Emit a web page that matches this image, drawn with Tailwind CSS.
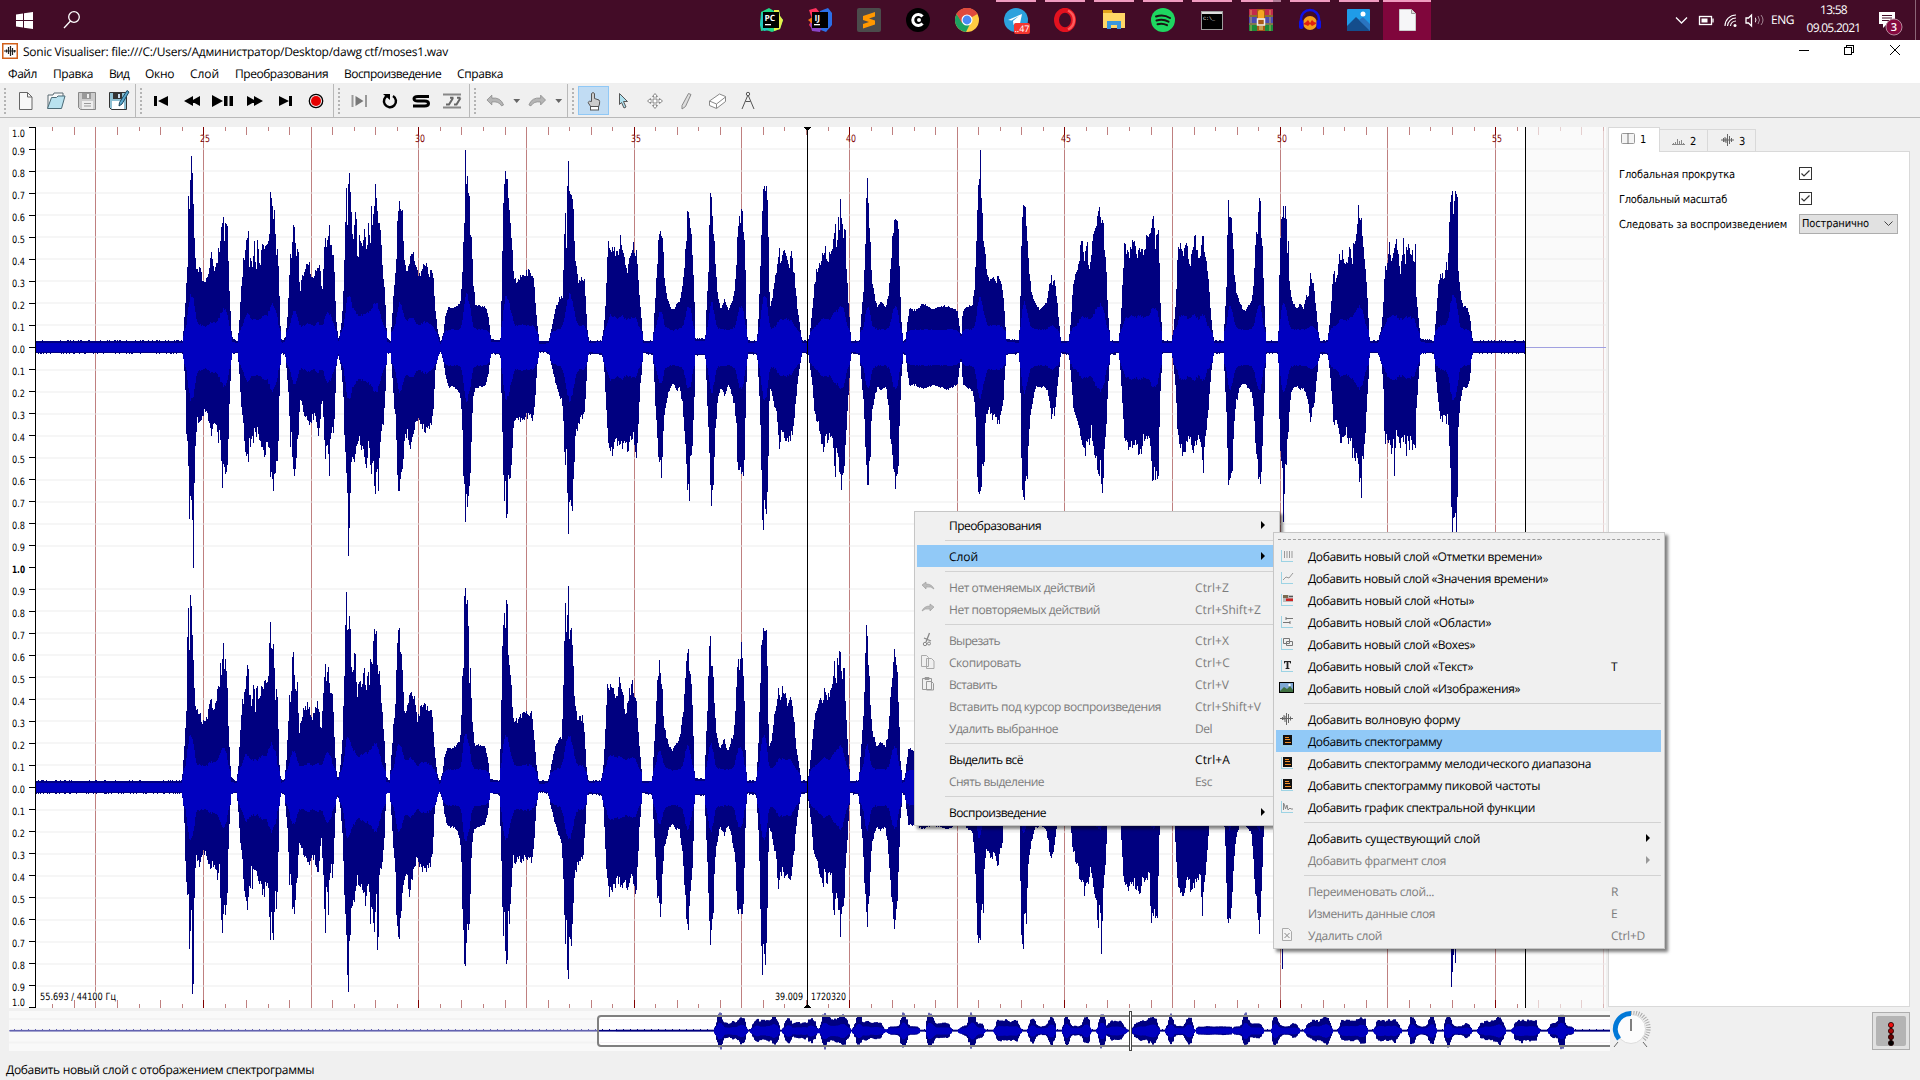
<!DOCTYPE html>
<html lang="ru">
<head>
<meta charset="utf-8">
<title>Sonic Visualiser</title>
<script src="https://cdn.jsdelivr.net/npm/@tailwindcss/browser@4"></script>
</head>
<body class="w-[1920px] h-[1080px] overflow-hidden bg-[#f0f0f0] text-black text-[12px] leading-[16px] font-['Open_Sans','Noto_Sans',sans-serif] [text-rendering:geometricPrecision] relative flex flex-col whitespace-nowrap">

<!-- Taskbar -->
<header class="h-[40px] w-full bg-[#430c27] flex shrink-0 text-white">
  <div class="w-[746px] flex">
    <div class="w-[48px] grid place-items-center"><svg width="17" height="17" viewBox="0 0 17 17" fill="#fff"><path d="M0 2.5l7-1v6.6H0zM8 1.3L17 0v8.1H8zM0 9h7v6.600l-7-1zM8 9h9v8l-9-1.300z"/></svg></div>
    <div class="w-[48px] grid place-items-center"><svg width="18" height="18" viewBox="0 0 18 18" fill="none" stroke="#fff" stroke-width="1.300"><circle cx="11" cy="6" r="5.300"/><path d="M7.500 10L1 17"/></svg></div>
  </div>
  <nav class="flex w-[690px]">
    <div class="w-[49px] grid place-items-center"><svg width="26" height="26" viewBox="0 0 26 26"><path d="M3 5l8-4 5 3 5-1 1 6 3 4-3 9-8 3-6-2-5 1-1-6z" fill="#21d789"/><path d="M16 3l5 0 1 6 3 4-3 9-6 2z" fill="#e8ee49"/><path d="M4 5l-2 13 4 6 5-1z" fill="#20c8c0"/><rect x="5" y="5" width="16" height="16" fill="#000"/><text x="6.500" y="13.500" font-size="8.500" font-weight="700" fill="#fff" font-family="Open Sans">PC</text><rect x="7" y="17" width="6" height="1.300" fill="#fff"/></svg></div>
    <div class="w-[49px] grid place-items-center"><svg width="26" height="26" viewBox="0 0 26 26"><path d="M2 3l7-2 5 6-8 16-4-5 3-6z" fill="#fe315d"/><path d="M13 4l8-3 4 5v12l-6 7-8-3z" fill="#2b6fe8"/><path d="M3 16l2 8 8 1 2-6z" fill="#8a45c8"/><path d="M1 13l6-4v9z" fill="#f97a12"/><rect x="5" y="5" width="16" height="16" fill="#000"/><text x="7.500" y="13.500" font-size="8.500" font-weight="700" fill="#fff" font-family="Open Sans">IJ</text><rect x="7" y="17" width="6" height="1.300" fill="#fff"/></svg></div>
    <div class="w-[49px] grid place-items-center"><svg width="24" height="24" viewBox="0 0 24 24"><rect width="24" height="24" rx="2" fill="#4b4b4b"/><path d="M6 8l12-4v4.500l-6 2 6 2v4L6 20.500V16l6-2-6-2z" fill="#ff9800"/></svg></div>
    <div class="w-[49px] grid place-items-center"><svg width="24" height="24" viewBox="0 0 24 24"><circle cx="12" cy="12" r="12" fill="#000"/><path d="M16.500 8.500A5.500 5.500 0 1 0 16.500 15.500" fill="none" stroke="#fff" stroke-width="3"/><circle cx="13" cy="12" r="2" fill="#fff"/></svg></div>
    <div class="w-[49px] grid place-items-center"><svg width="24" height="24" viewBox="0 0 24 24"><circle cx="12" cy="12" r="12" fill="#ffcd42"/><path d="M12 12L1.600 6A12 12 0 0 1 22.400 6z" fill="#df4a3e"/><path d="M12 12h-6L1.600 6A12 12 0 0 0 11 24l4-8z" fill="#1da261"/><path d="M1.600 6L7 15l5-9h10.400A12 12 0 0 0 1.600 6z" fill="#df4a3e"/><circle cx="12" cy="12" r="5.500" fill="#fff"/><circle cx="12" cy="12" r="4.400" fill="#4a8af4"/></svg></div>
    <div class="w-[49px] grid place-items-center relative"><i class="absolute top-0 left-[5px] w-[40px] h-[2px] bg-[#f09cc0]"></i><svg width="24" height="24" viewBox="0 0 24 24"><circle cx="12" cy="12" r="12" fill="#2ca1dd"/><path d="M4 12l14-6-2.500 12-4-3-2 2-.500-4 6-5-7.500 4.500z" fill="#fff"/></svg><span class="absolute left-[23px] top-[23px] w-[16px] h-[11px] rounded-[2px] bg-[#f5372f] text-[9px] leading-[11px] text-center">..47</span></div>
    <div class="w-[49px] grid place-items-center relative"><i class="absolute top-0 left-[5px] w-[40px] h-[2px] bg-[#f09cc0]"></i><svg width="24" height="24" viewBox="0 0 24 24"><ellipse cx="12" cy="12" rx="8.500" ry="9.700" fill="none" stroke="#e3121f" stroke-width="5"/><path d="M15 2.500q6 3 6 9.500t-6 9.500" fill="none" stroke="#ff5a5a" stroke-width="2.500"/></svg></div>
    <div class="w-[49px] grid place-items-center relative"><i class="absolute top-0 left-[5px] w-[40px] h-[2px] bg-[#f09cc0]"></i><svg width="22" height="20" viewBox="0 0 22 20"><path d="M0 1h8l2 2h12v15H0z" fill="#ffd766"/><rect width="9" height="3" fill="#e2a21c"/><path d="M4 19v-8h14v8h-4v-4H8v4z" fill="#3a96dd"/></svg></div>
    <div class="w-[49px] grid place-items-center relative"><i class="absolute top-0 left-[5px] w-[40px] h-[2px] bg-[#f09cc0]"></i><svg width="24" height="24" viewBox="0 0 24 24"><circle cx="12" cy="12" r="12" fill="#1ed760"/><path d="M5 8.500q7.500-2.500 14 1.500M5.500 12.500q6.500-2 12 1.200M6.500 16.200q5-1.500 9.500 1" fill="none" stroke="#191414" stroke-width="2" stroke-linecap="round"/></svg></div>
    <div class="w-[49px] grid place-items-center relative"><i class="absolute top-0 left-[5px] w-[40px] h-[2px] bg-[#f09cc0]"></i><svg width="22" height="19" viewBox="0 0 22 19"><rect x=".5" y=".5" width="21" height="18" fill="#000" stroke="#9c9c9c"/><rect x="1" y="1" width="20" height="2" fill="#ddd"/><text x="2" y="9" font-size="5" fill="#fff" font-family="Liberation Mono">C:\_</text></svg></div>
    <div class="w-[49px] grid place-items-center relative"><i class="absolute top-0 left-[5px] w-[40px] h-[2px] bg-[#f09cc0]"></i><i class="absolute top-0 left-[37px] w-[8px] h-[2px] bg-[#b07a96]"></i><svg width="24" height="22" viewBox="0 0 24 22"><rect width="24" height="6" fill="#c22b4b"/><rect y="6" width="24" height="2" fill="#8a7030"/><rect y="8" width="24" height="6" fill="#4c4cb0"/><rect y="14" width="24" height="2" fill="#807850"/><rect y="16" width="24" height="6" fill="#1d8a3c"/><path d="M2 1v5M21 1v5M2 8v6M21 8v6M2 16v6M21 16v6" stroke="#e8d060" opacity=".7"/><rect x="8" width="8" height="22" fill="#a85a18"/><rect x="9" y="1" width="6" height="10" rx="2" fill="#f5a623"/><path d="M8.500 10h7v6h-7z" fill="none" stroke="#eee" stroke-width="1.500"/><rect x="10" y="17" width="4" height="4" fill="#c8a050"/></svg></div>
    <div class="w-[49px] grid place-items-center relative"><i class="absolute top-0 left-[5px] w-[40px] h-[2px] bg-[#f09cc0]"></i><svg width="24" height="24" viewBox="0 0 24 24"><circle cx="12" cy="15" r="7" fill="#f5a01d"/><path d="M5 16l3-2 2-2 2 3 2-3 2 2 3 1-3 2-2 1-2-2-2 2-2-1z" fill="#e02010"/><path d="M3 15V11a9 9 0 0 1 18 0v4" fill="none" stroke="#0f12e8" stroke-width="2.500"/><rect x="1" y="12" width="4.500" height="9" rx="2" fill="#0f12e8"/><rect x="18.500" y="12" width="4.500" height="9" rx="2" fill="#0f12e8"/></svg></div>
    <div class="w-[49px] grid place-items-center relative"><i class="absolute top-0 left-[5px] w-[40px] h-[2px] bg-[#f09cc0]"></i><svg width="23" height="22" viewBox="0 0 23 22"><rect width="23" height="22" rx="1" fill="#1f9ce8"/><path d="M0 17L9 8l14 13v1H0z" fill="#144d8c"/><path d="M12 11l4-3 7 7v7z" fill="#2a74c0"/><circle cx="16" cy="5" r="2.500" fill="#fff"/></svg></div>
    <div class="w-[48px] grid place-items-center relative bg-[#80063c]"><i class="absolute top-0 left-0 w-[48px] h-[2px] bg-[#f09cc0]"></i><svg width="17" height="22" viewBox="0 0 17 22"><path d="M.5.5h12l4 4v17H.5z" fill="#f6f6f8" stroke="#ccc"/><path d="M12.500.5v4h4" fill="#ddd" stroke="#999"/></svg></div>
  </nav>
  <div class="w-[241px] ml-auto h-full flex items-center relative mr-[4px]">
    <svg width="80" height="20" viewBox="0 0 80 20" class="shrink-0" fill="none" stroke="#fff" stroke-width="1.300"><path d="M1 7.500l5.500 5.500L12 7.500"/><rect x="24.500" y="6.500" width="12" height="8"/><path d="M38 8.500v4"/><rect x="26.500" y="8.500" width="6" height="4" fill="#fff" stroke="none"/><g stroke-width="1.100"><path d="M50 16a11 11 0 0 1 11-11M52.500 16a8.500 8.500 0 0 1 8.500-8M55.500 16a5.500 5.500 0 0 1 5.500-5"/></g><circle cx="60" cy="15.500" r="1.500" fill="#fff" stroke="none"/><path d="M71 8h2.500l3-3v11l-3-3H71z"/></svg>
    <svg width="12" height="20" viewBox="0 0 12 20" class="shrink-0" fill="none" stroke="#fff" stroke-width="1"><path d="M0 7.500q2 2.500 0 5"/><path d="M3 6q3 4 0 8M6 5q4 5 0 10" opacity=".5"/></svg>
    <span class="ml-[4px] w-[23px] shrink-0"><span data-w="23">ENG</span></span>
    <div class="ml-[11px] w-[57px] shrink-0 flex flex-col items-center leading-[18px] pb-[2px]"><span data-w="27">13:58</span><span data-w="54">09.05.2021</span></div>
    <svg width="28" height="28" viewBox="0 0 28 28" class="ml-[17px] mt-[6px] shrink-0"><path d="M0 3h16v12H8l-4 4v-4H0z" fill="#fff"/><path d="M3 6.500h10M3 9h10M3 11.500h10" stroke="#430c27"/><circle cx="15" cy="18" r="8" fill="#85093f" stroke="#b68a9c"/><text x="15" y="22" text-anchor="middle" font-size="11" font-weight="600" fill="#fff" font-family="Open Sans">3</text></svg>
    <i class="absolute right-0 top-0 w-px h-[40px] bg-[#8b6577]"></i>
  </div>
</header>

<!-- Title bar -->
<div class="h-[23px] bg-white flex items-center shrink-0">
  <svg width="16" height="16" viewBox="0 0 16 16" class="ml-[2px] mb-[1px]"><rect x=".75" y=".75" width="14.500" height="14.500" fill="#fff" stroke="#d2601a" stroke-width="1.500"/><path d="M2 8h12M4.500 6.500v3M6.500 4v7M8.500 3v10M10.500 5v7M12.500 7v2.500" fill="none" stroke="#222" stroke-width="1.200"/></svg>
  <span class="ml-[5px] pt-[1px]" data-w="425">Sonic Visualiser: file:///C:/Users/Администратор/Desktop/dawg ctf/moses1.wav</span>
  <svg width="102" height="12" viewBox="0 0 102 12" class="ml-auto mr-[19px] mb-[3px]" fill="none" stroke="#000" shape-rendering="crispEdges"><path d="M0 6.500h10M45.500 3.500h7v7h-7zM47.500 3.500v-2h7v7h-2"/><path d="M91 1l10 10M101 1L91 11" shape-rendering="auto"/></svg>
</div>
<!-- Menu bar -->
<div class="h-[21px] bg-white flex items-center gap-[16px] pl-[8px] pt-[2px] shrink-0 border-b border-[#efefef]">
  <span data-w="29">Файл</span><span data-w="40">Правка</span><span data-w="20">Вид</span><span data-w="29">Окно</span><span data-w="29">Слой</span><span data-w="93">Преобразования</span><span data-w="97">Воспроизведение</span><span data-w="46">Справка</span>
</div>
<!-- Tool bar -->
<div class="h-[34px] bg-[#f0f0f0] border-b border-[#b9b9b9] flex shrink-0">
  <div class="w-[136px] flex items-center border-r border-[#b9b9b9]">
    <i class="ml-[4px] w-[2px] h-[26px] border-l-2 border-dotted border-[#b4b4b4]"></i>
    <svg class="ml-[10px]" width="116" height="26" viewBox="16 0 116 26"><path d="M19.500 4.500h8l4.500 4.500v12.500H19.500z" fill="#f8f8f8" stroke="#666"/><path d="M27.500 4.500v4.500h4.500" fill="none" stroke="#666"/><path d="M48 20V7h5l1-2h9v4" fill="#f8f8f8" stroke="#5a6a72"/><path d="M47.500 20.500l4-11h5l1.500-1.500h7l-3.500 12.500z" fill="#b9e2ef" stroke="#4b6a76"/><path d="M78.500 4.500h17v17h-15l-2-2z" fill="#ccc" stroke="#888"/><rect x="82" y="5" width="9" height="6" fill="#999"/><rect x="87" y="6" width="2" height="4" fill="#eee"/><rect x="82" y="13" width="11" height="8" fill="#eee"/><path d="M84 15.500h7M84 18h7" stroke="#999"/><path d="M109.500 4.500h17v17h-15l-2-2z" fill="#8fc0d2" stroke="#333"/><rect x="113" y="5" width="9" height="6" fill="#333"/><rect x="118" y="6" width="2" height="4" fill="#cde"/><rect x="112" y="13" width="12" height="8" fill="#fff"/><path d="M127 2.500l2 1.500-7 12-3 2 .500-3.500z" fill="#5aa8cc" stroke="#1d4a62"/></svg>
  </div>
  <div class="w-[198px] flex items-center border-r border-[#b9b9b9]">
    <i class="ml-[4px] w-[2px] h-[26px] border-l-2 border-dotted border-[#b4b4b4]"></i>
    <svg class="ml-[10px]" width="176" height="26" viewBox="152 0 176 26" fill="#000"><path d="M154 8h3v10h-3zM168 8v10l-10-5zM193 8v10l-9-5zM200 8v10l-9-5zM212 7v12l11-6zM224 8h3.500v10H224zM229.500 8h3.500v10h-3.500zM247 8v10l9-5zM254 8v10l9-5zM279 8v10l10-5zM289 8h3v10h-3z"/><circle cx="316" cy="13" r="6.700" stroke="#000" stroke-width="1.300" fill="#f4e8e8"/><circle cx="316" cy="13" r="5" fill="#e60000"/></svg>
  </div>
  <div class="w-[136px] flex items-center border-r border-[#b9b9b9]">
    <i class="ml-[4px] w-[2px] h-[26px] border-l-2 border-dotted border-[#b4b4b4]"></i>
    <svg class="ml-[10px]" width="116" height="26" viewBox="350 0 116 26" fill="none"><path d="M352.500 7v12M366 7v12" stroke="#999" stroke-width="2"/><path d="M355.500 8v10l8-5z" fill="#777"/><path d="M388 7.500a6 6 0 1 0 5 .500" stroke="#000" stroke-width="2.500"/><path d="M383 6h7v6z" fill="#000"/><path d="M429 8.500h-11q-4 0-4 2.300t4 2.200h6.500q4 0 4 2.500t-4 2.500H413" stroke="#000" stroke-width="3"/><path d="M443 6.500h18M443 19.500h18" stroke="#888" stroke-width="2"/><path d="M446 16.500h3l4-6.500M454 16.500h2.500l4-6.500M450 9.800h3.500M457 9.800h3.500" stroke="#666" stroke-width="2"/></svg>
  </div>
  <div class="w-[98px] flex items-center border-r border-[#b9b9b9]">
    <i class="ml-[4px] w-[2px] h-[26px] border-l-2 border-dotted border-[#b4b4b4]"></i>
    <svg class="ml-[9px]" width="84" height="26" viewBox="484 0 84 26"><path d="M486 12l5-5v3q9-1 12 7l-2 1q-3-5-10-4v3z" fill="#b5b5b5" stroke="#888" stroke-width=".8"/><path d="M513 11h7l-3.500 4zM556 11h7l-3.500 4z" fill="#666"/><path d="M546 12l-5-5v3q-9-1-12 7l2 1q3-5 10-4v3z" fill="#b5b5b5" stroke="#888" stroke-width=".8"/></svg>
  </div>
  <div class="flex items-center">
    <i class="ml-[4px] w-[2px] h-[26px] border-l-2 border-dotted border-[#b4b4b4]"></i>
    <div class="ml-[4px] w-[31px] h-[29px] bg-[#c1dcf3] border border-[#90c8f6] grid place-items-center"><svg width="16" height="20" viewBox="0 0 16 20"><path d="M5.500 10.500V2.500q1.500-2 3 0v5l4.500 1.500q1 1 .5 4l-1 3h-7.500L2 11.500q1-2 3.500-1z" fill="#ccc" stroke="#555"/><rect x="4.500" y="15.500" width="8" height="3.500" fill="#fff" stroke="#555"/></svg></div>
    <svg width="150" height="26" viewBox="609 0 150 26" fill="none" stroke="#888"><path d="M619.500 5.500l8 8h-4l2.500 5.500-2 1-2.500-5.500-2 2z" fill="#aee0ee" stroke="#555"/><path d="M655 5.500l2.500 3h-1.500v3.500h3.500v-1.500l3 2.500-3 2.500V14H656v3.500h1.500l-2.500 3-2.500-3h1.500V14h-3.500v1.500l-3-2.500 3-2.500V12h3.500V8.500h-1.500z" fill="#fff"/><path d="M688.500 5.500l2.500 1-5.500 12-3.500 2.500v-3.500z" fill="#ddd"/><path d="M709.500 13l10-7 6 2.500v5l-9 7-7-3zM709.500 13l7 3v4M716.500 16l9-7" fill="#fff"/><circle cx="748" cy="6" r="1.700" stroke="#555"/><path d="M747.500 8l-5.500 13M748.500 8l5.500 13M745.500 13.500h5" stroke="#555"/></svg>
  </div>
</div>

<!-- Work area -->
<main class="flex h-[890px] shrink-0 pt-[9px] pl-[9px] items-start">
  <svg id="pane" width="1597" height="881" viewBox="9 127 1597 881" class="bg-white shrink-0 font-['DejaVu_Sans_Condensed','Noto_Sans',sans-serif]"></svg>
  <aside class="ml-[2px] w-[302px] h-[880px] flex flex-col">
    <div class="flex items-end h-[24px]">
      <div class="relative z-10 w-[52px] h-[25px] -mb-px bg-white border border-b-0 border-[#d9d9d9] flex items-center gap-[5px] pl-[12px] text-[11px] font-['DejaVu_Sans_Condensed']"><svg width="14" height="11" viewBox="0 0 14 11" class="mb-[3px]"><rect x=".5" y=".5" width="13" height="10" rx="1" fill="#f4f4f4" stroke="#999"/><path d="M7 0v11" stroke="#777"/></svg>1</div>
      <div class="w-[48px] h-[22px] border border-b-0 border-l-0 border-[#d9d9d9] flex items-center gap-[5px] pl-[12px] pt-[2px] text-[11px] font-['DejaVu_Sans_Condensed']"><svg width="13" height="7" viewBox="0 0 13 7"><path d="M0 6.500h13M1.500 6V5M3.500 6V4M5.500 6V1M7.500 6V3M9.500 6V2M11.500 6V5" stroke="#888"/></svg>2</div>
      <div class="w-[48px] h-[22px] border border-b-0 border-l-0 border-[#d9d9d9] flex items-center gap-[5px] pl-[13px] pt-[2px] text-[11px] font-['DejaVu_Sans_Condensed']"><svg width="13" height="12" viewBox="0 0 13 12" class="mb-[3px]"><path d="M0 6h13M2.500 4v4M4 3v5M5 4v5M6.500 0v12M8.500 2v8M10.500 4v4" fill="none" stroke="#666"/></svg>3</div>
    </div>
    <div class="flex-1 bg-white border border-[#d9d9d9] pt-[10px] pl-[10px] flex flex-col text-[11px] font-['DejaVu_Sans_Condensed','Noto_Sans',sans-serif]">
      <div class="h-[25px] flex items-center"><span class="w-[180px]"><span data-w="116" data-f="11px 'DejaVu Sans Condensed'">Глобальная прокрутка</span></span><svg width="13" height="13" viewBox="0 0 13 13" class="mb-[2px]"><rect x=".5" y=".5" width="12" height="12" fill="#fff" stroke="#333"/><path d="M2.500 6.500l2.500 2.500 5.500-5.500" fill="none" stroke="#333" stroke-width="1.200"/></svg></div>
      <div class="h-[25px] flex items-center"><span class="w-[180px]"><span data-w="108" data-f="11px 'DejaVu Sans Condensed'">Глобальный масштаб</span></span><svg width="13" height="13" viewBox="0 0 13 13" class="mb-[2px]"><rect x=".5" y=".5" width="12" height="12" fill="#fff" stroke="#333"/><path d="M2.500 6.500l2.500 2.500 5.500-5.500" fill="none" stroke="#333" stroke-width="1.200"/></svg></div>
      <div class="h-[25px] flex items-center"><span class="w-[180px]"><span data-w="168" data-f="11px 'DejaVu Sans Condensed'">Следовать за воспроизведением</span></span><div class="w-[99px] h-[20px] mb-[1px] bg-[#e1e1e1] border border-[#adadad] flex items-center pl-[2px]"><span data-w="67" data-f="11px 'DejaVu Sans Condensed'">Постранично</span><svg width="9" height="6" viewBox="0 0 9 6" class="ml-auto mr-[4px]"><path d="M.5.5l4 4 4-4" fill="none" stroke="#444"/></svg></div></div>
    </div>
  </aside>
</main>

<!-- Overview strip -->
<section class="flex h-[52px] shrink-0 pl-[9px] pt-[3px]">
  <svg id="overview" width="1601" height="40" viewBox="9 1011 1601 40" class="bg-[#f9f9f9] shrink-0"></svg>
  <svg width="42" height="42" viewBox="0 0 42 42"><circle cx="21" cy="18" r="14.500" fill="#fcfcfc" stroke="#ddd"/><path d="M21 1.500a16 16 0 0 1 12.500 27.500" fill="none" stroke="#aaa" stroke-width="4.500" stroke-dasharray="1 1.500"/><path d="M21 2.500a15.500 15.500 0 0 0-12 25.500" fill="none" stroke="#0078d7" stroke-width="5"/><path d="M21 8v12" stroke="#555" stroke-width="1.500"/><path d="M8 31l-4 5M33 31l4 5" stroke="#666"/></svg>
  <div class="ml-auto mr-[10px] mt-[1px] w-[38px] h-[38px] bg-[#e1e1e1] border border-[#adadad] grid place-items-center"><svg width="30" height="30" viewBox="0 0 30 30"><rect width="30" height="30" rx="2" fill="#b4b4b4"/><path d="M15 8v20" stroke="#000" stroke-width="1.500"/><g stroke="#200" stroke-width=".8"><circle cx="15" cy="9" r="2.600" fill="#f01010"/><circle cx="15" cy="15" r="2.600" fill="#a80808"/><circle cx="15" cy="21" r="2.600" fill="#600"/><circle cx="15" cy="27" r="2.600" fill="#000"/></g></svg></div>
</section>
<footer class="flex-1 flex items-center pl-[6px]"><span data-w="308">Добавить новый слой с отображением спектрограммы</span></footer>

<!-- Context menus -->
<div id="ctx" class="absolute left-[914px] top-[511px] w-[366px] h-[315px] bg-[#f0f0f0] border border-[#c6c6c6] shadow-[3px_3px_3px_rgba(0,0,0,0.5)] pt-[2px]"></div>
<div id="sub" class="absolute left-[1273px] top-[532px] w-[392px] h-[417px] bg-[#f0f0f0] border border-[#c6c6c6] shadow-[3px_3px_3px_rgba(0,0,0,0.5)] pt-[6px]"><div class="h-[6px] mx-[4px] border-t border-dashed border-[#a0a0a0]"></div></div>

<script>
const AX = '<path d="M1.500 1v11M1 12.500h12" stroke="#9cd3e4" fill="none"/>';
const SPEC = AX + '<rect x="3" y="1" width="9" height="10" fill="#111"/><path d="M5 3.500h4M5 5.500h5M5 8.500h6" stroke="#f0902a"/>';
const icons = {
  undo: '<path d="M1 5l4-3v2q6 0 8 5-3-3-8-2v2z" fill="#bbb" stroke="#999" stroke-width=".6"/>',
  redo: '<path d="M13 5L9 2v2q-6 0-8 5 3-3 8-2v2z" fill="#bbb" stroke="#999" stroke-width=".6"/>',
  cut: '<path d="M8.500 0L5 9M3 5l7 3" stroke="#888" stroke-width="1.300" fill="none"/><circle cx="4" cy="11" r="1.700" fill="none" stroke="#888"/><circle cx="8" cy="10.500" r="1.500" fill="none" stroke="#888"/>',
  copy: '<path d="M.5 .5h5l2 2v9h-7zM5.500 3.500h5l2.500 2.500v7.500H5.500z" fill="#f0f0f0" stroke="#aaa"/>',
  paste: '<path d="M1.500 1.500h9v11h-9zM4 .5h4v2H4zM5.500 4.500h5l2 2v6.500h-7z" fill="#f0f0f0" stroke="#999"/>',
  inst: AX + '<path d="M4.500 2v7M7 2v7M9.500 2v7M12 2v7" stroke="#999"/>',
  val: AX + '<path d="M3 9l3-3 3 1 4-5" stroke="#999" fill="none"/>',
  note: AX + '<rect x="3" y="2" width="10" height="7" fill="#bbb"/><rect x="3" y="2" width="5" height="3" fill="#7a6a50"/><rect x="6" y="5.500" width="7" height="2.500" fill="#c22"/><path d="M9 3.500h4" stroke="#555"/>',
  reg: AX + '<path d="M6 3.500h7M3 7.500h7M6 2v3M10 6v3" stroke="#777"/>',
  box: AX + '<path d="M3.500 1.500h6v5h-6zM6.500 4.500h6v4h-6z" stroke="#777" fill="none"/>',
  text: AX + '<path d="M4 2h7v2.500h-.7L9.500 3H8.400v6h1v1H5.600V9h1V3H5.500L4.700 4.500H4z" fill="#222"/>',
  img: '<rect x="-.5" y="1.500" width="14" height="10" fill="#7fa8d4" stroke="#000"/><path d="M0 10l4-4 3 2 3-3 3 4v2H0z" fill="#3f7040"/><circle cx="9.500" cy="4" r="1.200" fill="#fff"/>',
  wave: '<path d="M0 6.500h13M2.500 5v3M4 3v5M5 4v6M6.500 1v12M8.500 2v9M10.500 4.500v4" fill="none" stroke="#666"/>',
  spec: SPEC,
  slice: AX + '<path d="M3.500 10V3l1 2 1 4 1.500-4 1 5 2-2 1 1h2" fill="none" stroke="#888"/>',
  del: '<path d="M2.500 .5h6l3 3v9h-9z" fill="#f4f4f4" stroke="#aaa"/><path d="M4.500 5l5 5M9.500 5l-5 5" stroke="#888"/>'
};
// item: [icon, label, label width, shortcut, shortcut width, flags]  d = disabled, a = submenu arrow, h = highlighted
const ctxItems = [
  ['', 'Преобразования', 92, '', 0, 'a'], 0, ['', 'Слой', 29, '', 0, 'ah'], 0,
  ['undo', 'Нет отменяемых действий', 146, 'Ctrl+Z', 34, 'd'], ['redo', 'Нет повторяемых действий', 151, 'Ctrl+Shift+Z', 66, 'd'], 0,
  ['cut', 'Вырезать', 51, 'Ctrl+X', 34, 'd'], ['copy', 'Скопировать', 72, 'Ctrl+C', 35, 'd'], ['paste', 'Вставить', 48, 'Ctrl+V', 34, 'd'],
  ['', 'Вставить под курсор воспроизведения', 212, 'Ctrl+Shift+V', 66, 'd'], ['', 'Удалить выбранное', 109, 'Del', 17, 'd'], 0,
  ['', 'Выделить всё', 74, 'Ctrl+A', 35, ''], ['', 'Снять выделение', 95, 'Esc', 17, 'd'], 0, ['', 'Воспроизведение', 97, '', 0, 'a']];
const subItems = [
  ['inst', 'Добавить новый слой «Отметки времени»', 234, '', 0, ''], ['val', 'Добавить новый слой «Значения времени»', 240, '', 0, ''],
  ['note', 'Добавить новый слой «Ноты»', 166, '', 0, ''], ['reg', 'Добавить новый слой «Области»', 183, '', 0, ''],
  ['box', 'Добавить новый слой «Boxes»', 167, '', 0, ''], ['text', 'Добавить новый слой «Текст»', 165, 'T', 6, ''],
  ['img', 'Добавить новый слой «Изображения»', 212, '', 0, ''], 0,
  ['wave', 'Добавить волновую форму', 152, '', 0, ''], ['spec', 'Добавить спектограмму', 134, '', 0, 'h'],
  ['spec', 'Добавить спектограмму мелодического диапазона', 283, '', 0, ''], ['spec', 'Добавить спектограмму пиковой частоты', 232, '', 0, ''],
  ['slice', 'Добавить график спектральной функции', 227, '', 0, ''], 0,
  ['', 'Добавить существующий слой', 172, '', 0, 'a'], ['', 'Добавить фрагмент слоя', 138, '', 0, 'ad'], 0,
  ['', 'Переименовать слой...', 126, 'R', 7, 'd'], ['', 'Изменить данные слоя', 127, 'E', 6, 'd'], ['del', 'Удалить слой', 74, 'Ctrl+D', 34, 'd']];
function buildMenu(el, items, labelW) {
  el.insertAdjacentHTML('beforeend', items.map(it => {
    if (!it) return '<div class="h-[9px] pt-[4px] ml-[30px] mr-[3px]"><div class="h-px bg-[#d2d2d2]"></div></div>';
    const [ic, t, w, k, kw, f] = it;
    const dis = f.includes('d');
    return `<div class="h-[22px] ml-[2px] mr-[3px] flex items-center ${f.includes('h') ? 'bg-[#91c9f7]' : ''} ${dis ? 'text-[#7c7c7c]' : 'text-black'}">
      <span class="w-[32px] pl-[4px] pb-[1px] shrink-0"><svg width="14" height="14" viewBox="0 0 14 14" class="overflow-visible">${icons[ic] || ''}</svg></span>
      <span class="${labelW} shrink-0 pt-px"><span data-w="${w}">${t}</span></span>
      <span class="pt-px">${k ? `<span data-w="${kw}">${k}</span>` : ''}</span>
      ${f.includes('a') ? `<svg width="4" height="8" viewBox="0 0 4 8" class="ml-auto mb-[1px] ${el.id === 'sub' ? 'mr-[11px]' : 'mr-[11px]'}"><path d="M0 0l4 4-4 4z" fill="${dis ? '#999' : '#000'}"/></svg>` : ''}</div>`;
  }).join(''));
}
buildMenu(document.getElementById('ctx'), ctxItems, 'w-[246px]');
buildMenu(document.getElementById('sub'), subItems, 'w-[303px]');

// Peak tables: x, upper edge, lower edge; 682 is the zero line and 3 units make a pixel of height
const peaks = [
 {o:0, s:2.45, d:[88,662,700,448,662,700,451,610,730,454,560,790,457,490,930,460,430,960,461,205,1000,464,270,1195,466,255,1170,468,110,1110,471,147,1175,474,250,1340,477,352,1040,480,440,955,483,460,890,490,450,915,498,485,880,503,488,872,510,470,890,518,405,935,524,460,905,532,435,925,536,355,970,539,425,890,542,315,1020,545,330,1095,547,268,1030,550,365,1035,554,300,1052,558,325,1050,561,470,900,564,555,800,568,650,700,582,662,700,586,620,745,590,530,830,596,430,900,599,420,965,606,355,1010,608,292,1045,611,430,960,615,410,990,618,440,900,620,435,1000,624,370,920,628,460,940,631,350,925,636,445,960,643,375,980,650,372,1000,655,385,960,660,350,975,662,240,1090,667,250,1060,670,285,1125,672,243,1025,674,330,1090,677,410,1000,680,380,1035,683,440,950,686,600,750,690,660,700,699,655,705,704,600,770,708,500,830,711,405,970,715,420,940,718,305,1045,721,322,1055,723,350,1085,727,400,980,731,370,960,735,520,840,740,475,850,747,450,890,753,440,900,758,437,915,766,485,890,773,460,885,780,433,945,785,450,900,789,530,820,793,430,900,797,362,1030,801,388,970,804,350,985,807,300,1063,810,370,940,814,405,920,818,410,950,821,520,850,825,620,720,830,660,705,836,620,740,841,540,815,845,380,970,849,192,1070,851,320,1080,854,190,1308,858,185,1150,861,290,1030,865,350,1020,870,300,1010,873,298,990,877,430,950,881,350,960,889,370,980,895,330,1010,899,420,1030,903,315,950,907,380,1000,910,275,1080,914,325,1020,918,235,1095,921,208,1100,924,255,1020,927,330,1150,931,318,960,935,390,930,940,475,900,944,540,830,948,650,700,957,660,700,961,590,760,966,500,860,970,460,900,974,300,1070,978,222,1125,981,290,1065,985,243,1060,988,335,1010,992,440,960,999,455,930,1005,407,1000,1012,390,950,1018,425,915,1025,480,890,1032,450,920,1039,440,925,1045,430,925,1052,460,920,1058,455,910,1062,480,870,1067,570,750,1073,640,710,1080,665,695,1086,640,720,1091,590,760,1099,560,800,1110,565,800,1120,555,805,1128,545,830,1132,500,870,1135,360,1050,1138,310,1100,1140,90,1205,1143,170,1100,1145,118,1170,1147,265,1175,1149,155,1095,1152,370,1100,1154,290,1020,1157,415,900,1160,490,830,1165,555,805,1175,555,800,1190,560,795,1197,590,760,1203,655,700,1226,660,705,1229,530,830,1233,280,1030,1236,210,1130,1238,165,1040,1240,205,1180,1243,138,1195,1246,250,1050,1250,320,1090,1255,370,990,1259,470,890,1266,480,905,1272,485,890,1280,465,900,1290,460,885,1300,455,890,1306,460,900,1311,530,840,1316,610,740,1322,662,695,1345,660,700,1352,620,740,1362,560,790,1370,540,820,1378,530,850,1382,410,940,1385,255,1060,1388,390,970,1390,210,1090,1393,123,1240,1395,215,1165,1399,230,1125,1402,205,1165,1406,300,1045,1410,425,950,1417,480,910,1425,470,895,1432,480,880,1436,560,800,1440,640,710,1444,660,702,1475,660,705,1480,620,730,1485,530,850,1490,362,960,1495,390,1000,1500,385,990,1508,400,970,1515,410,960,1520,350,960,1527,390,980,1533,450,960,1538,450,990,1544,400,960,1552,375,940,1557,410,990,1560,400,1000,1564,480,930]},
 {o:640, s:2.45, d:[1,560,790,4,600,760,8,660,700,32,660,705,36,570,800,41,460,920,46,350,1020,49,315,1010,54,350,1072,57,390,950,60,480,880,66,530,840,74,560,800,82,570,790,90,552,812,98,540,800,104,500,850,109,440,920,113,370,1000,117,270,1110,119,262,1095,121,275,1130,124,330,1010,129,400,960,133,520,850,136,655,705,160,655,705,164,540,810,168,440,930,171,260,1030,174,212,1175,177,300,1130,181,330,1075,185,440,930,190,525,850,198,565,800,208,540,825,217,572,795,225,545,820,232,520,860,236,440,900,240,340,1060,243,290,1060,246,320,1040,250,255,1050,255,350,1045,258,430,920,261,600,780,264,662,700,287,660,705,292,560,800,296,400,950,299,290,1150,302,220,1275,305,220,1150,309,195,1215,312,222,1140,315,370,1000,318,560,800,324,540,820,331,470,870,336,440,880,341,385,985,345,430,945,350,385,930,355,390,945,360,425,960,366,440,950,370,390,950,375,440,930,380,480,870,385,560,800,391,610,740,397,660,700,412,660,700,417,630,740,422,570,790,427,500,860,433,450,900,440,440,920,445,410,960,451,420,985,454,378,930,460,430,960,466,405,945,472,400,950,478,305,1080,482,380,980,486,310,1000,489,320,1070,491,245,1060,493,265,1145,497,340,1020,500,345,1060,503,320,1000,506,440,920,511,550,820,517,660,700,538,660,705,543,580,780,548,500,850,552,400,960,556,170,1040,559,215,1120,562,330,1015,565,350,1010,568,480,870,574,525,835,582,560,800,592,545,810,603,560,800,610,520,860,614,450,950,618,370,1000,623,310,1060,625,272,1105,629,310,1060,633,330,1035,636,440,920,640,600,780,645,660,700,651,655,705,655,610,750,660,565,795,675,570,795,685,560,800,694,550,805,705,558,800,720,565,795,735,558,800,752,558,808,765,565,800,778,570,790,783,620,740,787,655,710,791,570,790,800,560,800,815,555,812,820,500,850,824,400,950,828,210,1090,831,195,1150,834,110,1120,837,230,1120,840,330,1010,843,380,1080,846,410,920,850,450,880,856,490,860,863,460,900,868,480,870,873,480,890,880,475,910,884,480,870,890,520,850,893,570,780,897,655,705,929,660,700,932,550,800,936,290,1090,941,235,1155,945,275,1050,949,340,1075,953,455,930,960,520,850,970,550,800,980,570,800,990,555,800,998,545,810,1004,490,850,1008,465,900,1012,500,870,1016,475,880,1022,540,810,1027,610,750,1031,660,700,1051,660,705,1056,600,770,1062,480,860,1068,470,890,1076,420,920,1083,350,980,1088,430,960,1091,400,1000,1096,370,960,1100,450,970,1106,410,920,1111,325,970,1115,315,1000,1119,300,1020,1123,290,1070,1125,278,1085,1129,300,1010,1132,292,1172,1135,290,1085,1138,380,980,1142,440,920,1147,580,800,1152,660,705,1173,660,700,1178,600,760,1183,480,870,1188,345,960,1193,400,960,1200,400,980,1211,340,960,1216,420,970,1222,390,990,1228,375,990,1233,420,950,1243,335,960,1250,360,940,1255,310,1095,1259,295,1060,1263,375,1060,1270,318,1070,1272,400,950,1275,540,820,1280,660,700,1303,660,700,1308,620,740,1313,540,810,1318,400,950,1322,375,970,1331,400,1000,1341,375,960,1347,450,950,1353,380,1000,1360,350,970,1368,420,950,1375,400,950,1380,335,1065,1384,400,960,1390,440,910,1395,520,830,1400,600,750,1406,660,700,1430,660,700,1434,570,800,1438,470,900,1441,235,1100,1445,300,1060,1448,280,1065,1452,330,1030,1455,430,940,1460,510,850,1470,550,800,1482,575,790,1492,555,805,1500,540,820,1504,480,880,1508,370,970,1513,330,1030,1517,230,1085,1520,260,1110,1523,345,1060,1526,410,940,1530,560,820,1534,660,700]},
 {o:1200, s:3, d:[200,660,700,235,660,700,238,470,870,241,385,990,244,285,1020,247,300,1030,250,243,1218,253,290,1150,256,275,1040,260,320,1020,262,425,950,265,360,955,268,480,870,275,540,810,284,555,800,292,565,795,301,550,810,310,565,800,319,530,830,326,525,850,331,465,900,337,480,870,343,515,850,350,580,780,356,640,720,361,662,700,383,660,705,390,600,750,396,520,830,401,450,910,407,480,890,413,465,900,418,405,940,424,435,990,428,378,930,433,435,960,440,415,930,446,420,960,449,375,960,454,400,940,458,425,1020,461,345,970,466,385,1035,470,340,1010,475,262,1020,478,300,1100,481,320,1070,484,308,1130,487,335,1000,490,385,1020,495,420,950,500,500,860,505,580,790,509,660,700,535,660,700,545,620,735,550,560,790,555,445,975,559,440,950,565,420,960,568,352,955,574,420,1010,580,385,950,583,400,1070,589,370,930,595,385,945,601,460,990,608,410,930,611,365,960,615,440,940,619,385,1025,623,380,950,628,395,990,632,410,940,638,395,980,642,460,940,646,352,995,649,520,880,655,590,780,662,655,700,702,660,700,706,620,750,711,550,800,716,480,860,722,470,890,728,460,895,733,480,880,739,420,905,743,450,870,747,360,930,751,240,1010,754,215,1110,757,175,1280,761,290,1190,764,240,1180,767,235,1150,770,235,1230,772,188,1150,775,440,940,779,490,860,784,530,830,790,560,800,797,555,805,804,570,795,810,590,780,814,630,720,819,662,700,975,662,700]}];
// Second channel: columns whose peaks differ from the first
const peaks2 = [461,143,1000,464,270,1165,469,138,1050,474,300,1272,545,296,1118,547,247,1060,608,325,1010,662,185,1140,670,250,1138,718,275,1040,797,310,1118,849,95,1125,854,207,1295,858,205,1125,921,212,1000,927,340,1130,978,203,1137,1140,82,1217,1145,118,1090,1243,130,1198,1385,128,1150,1393,78,1257];
const pts = [];
peaks.forEach(p => { for (let i = 0; i < p.d.length; i += 3) pts.push([p.o + p.d[i] / p.s, (682 - p.d[i+1]) / 3, (p.d[i+2] - 682) / 3]); });
const X0 = 36, X1 = 1525;
function channel(seed, shift, over) {
  let s = seed; const rnd = () => (s = (s * 16807) % 2147483647) / 2147483647;
  const base = [], out = []; let j = 0;
  for (let x = X0; x < X1; x++) {
    const px = x + .5 + shift;
    while (j < pts.length - 2 && pts[j+1][0] < px) j++;
    const a = pts[j], b = pts[j+1], t = Math.max(0, Math.min(1, (px - a[0]) / (b[0] - a[0] || 1)));
    const u = a[1] + (b[1]-a[1]) * t, d = a[2] + (b[2]-a[2]) * t;
    base.push((u + d) / 2);
    const n = v => v < 9 ? v - .5 + (rnd() > .75 ? 1 : 0) : v < 46 ? v + (rnd() - .5) * 2 : v * (.95 + rnd() * .11);
    out.push([n(u), n(d)]);
  }
  for (let i = 0; i < over.length; i += 3) out[Math.round(over[i] / 2.45 - X0 - .4)] = [(682-over[i+1])/3, (over[i+2]-682)/3];
  const inner = base.map((v, i) => {
    let m = 0, c = 0; for (let k = -2; k <= 2; k++) if (base[i+k] !== undefined) { m += base[i+k]; c++; }
    m /= c; const o = m / 220, f = o < .33 ? .055 + .14 * o : .101 + .34 * (o - .33);
    return Math.min(v - 2.200, 220 * Math.min(f, .235) * (.97 + rnd() * .08));
  });
  return {out, inner};
}
const bars = (f, y) => { let d = ''; for (let i = 0; i < X1 - X0; i++) { const [u, w] = f(i); d += `M${X0+i+.5} ${(y-u).toFixed(1)}V${(y+w).toFixed(1)}`; } return d; };
const A = channel(77, 0, [474,250,1342,854,190,1308,1140,90,1205,1393,123,1240]), B = channel(4242, .8, peaks2);
let g = '';
const sx = t => Math.round(203.1 + (t - 25) * 43.066) + .5;
g += `<rect x="1525" y="127" width="81" height="881" fill="#fafafa"/>`;
for (let t = 21.5; t <= 57.5; t += .5) {
  const x = sx(t), faint = x > 1525 ? ' opacity=".35"' : '';
  if (t % 2.5 === 0) g += `<path d="M${x} 127V1008" stroke="#bf8080"${faint}/>`;
  const h = t % 1 === 0 ? 8 : 4;
  g += `<path d="M${x} 127v${h}M${x} 1008v-${h}" stroke="${t % 5 === 0 ? '#800000' : '#bf8080'}"${faint}/>`;
}
for (const y0 of [347, 787]) for (let k = -9; k <= 9; k++) if (k) g += `<rect x="36" y="${y0 + k*22 + (k<0?-1:0)}" width="1570" height="2" fill="#ececec" opacity=".45"/>`;
for (const [c, y] of [[A, 347.5], [B, 787.5]]) {
  g += `<path d="${bars(i => c.out[i], y)}" stroke="#000080"/><path d="${bars(i => [c.inner[i], c.inner[i]], y)}" stroke="#0000c0"/>`;
  g += `<path d="M1526 ${y}H1606" stroke="#a0a0e0"/>`;
}
g += '<path d="M1525.500 127V1008M807.500 127V1008" stroke="#000"/><path d="M804 127h7l-2.500 3h-2zM804 1008h7l-2.500-3h-2z" fill="#000"/><rect x="9" y="127" width="26" height="881" fill="#fff"/><path d="M35.500 127V1008" stroke="#000"/>';
for (let k = 0; k <= 40; k++) g += `<path d="M29 ${127.5 + k*22}h7" stroke="#000"/>`;
let labels = '';
for (let k = 0; k <= 40; k++) {
  const v = (k <= 20 ? Math.abs(10 - k) : Math.abs(30 - k)) / 10;
  const y = 127 + k * 22 + (k === 0 ? 9.500 : k === 40 ? -1 : 6);
  labels += `<text x="12" y="${y}" textLength="13" lengthAdjust="spacingAndGlyphs" font-size="10" ${k === 20 ? 'font-weight="700"' : ''}>${v.toFixed(1)}</text>`;
}
for (let t = 25; t <= 55; t += 5) labels += `<text x="${sx(t) - 3.500}" y="142" textLength="10" lengthAdjust="spacingAndGlyphs" font-size="10" fill="#800000">${t}</text>`;
for (const [x, w, t] of [[40, 76, '55.693 / 44100 Гц'], [775, 28, '39.009'], [811, 35, '1720320']]) labels += `<text x="${x}" y="1000" textLength="${w}" lengthAdjust="spacingAndGlyphs" font-size="10" stroke="#fff" stroke-width="2" paint-order="stroke">${t}</text>`;
document.getElementById('pane').innerHTML = `<g shape-rendering="crispEdges">${g}</g>${labels}`;

// Overview: two thirds of the pane's horizontal scale
let o1 = '', o2 = '';
for (let x = 10; x < 1610; x++) {
  const m = (x - 714) * 1.5 + 183, i = Math.floor(m) - X0;
  let u = .6, w = .4, n = .5;
  if (i >= 0) { let a = 0, b = 0, c = 0; for (let k = -1; k <= 1; k++) { const q = A.out[Math.min(i+k, A.out.length-1)] || [5,5]; a = Math.max(a, q[0]); b = Math.max(b, q[1]); c = Math.max(c, A.inner[Math.min(i+k, A.inner.length-1)] || 0); }
    u = a < 10 ? .8 : Math.min(18, a / 10); w = b < 10 ? .5 : Math.min(18.500, b / 10.500); n = a < 10 ? .4 : c / 6.500; }
  if (x % 7 === 0 && u < 1) u = 1.500;
  o1 += `M${x+.5} ${(1030.500-u).toFixed(1)}V${(1031+w).toFixed(1)}`;
  if (n > .5) o2 += `M${x+.5} ${(1031-n).toFixed(1)}V${(1031+n).toFixed(1)}`;
}
document.getElementById('overview').innerHTML = `<defs><clipPath id="win"><rect x="599" y="1017" width="1012" height="29"/></clipPath><g id="ow"><path d="M9 1030.800H1610" stroke="#000080"/><path d="${o1}" stroke="#000080"/><path d="${o2}" stroke="#0000c0"/></g></defs>
<path d="M9 1019h1601M9 1042.500h1601" stroke="#f3f3f3" stroke-width="2"/><use href="#ow" opacity=".6"/>
<g clip-path="url(#win)"><rect x="598" y="1016" width="1012" height="30" fill="#fff"/><path d="M598 1019.500h1012M598 1042.500h1012" stroke="#f7f3f7"/><use href="#ow"/></g>
<rect x="598" y="1016" width="1030" height="30" rx="3" fill="none" stroke="#808080" stroke-width="2"/><rect x="1129.500" y="1011.500" width="2" height="39" fill="#fff" stroke="#444"/>`;

// Track each label to its design width; a canvas gives the natural width whatever the load state of the stylesheet
const pen = document.createElement('canvas').getContext('2d');
pen.textRendering = 'geometricPrecision';
document.querySelectorAll('[data-w]').forEach(e => {
  pen.font = e.dataset.f || '12px "Open Sans"';
  const n = e.textContent.length;
  e.style.letterSpacing = ((+e.dataset.w - pen.measureText(e.textContent).width) / n).toFixed(3) + 'px';
});
</script>
</body>
</html>
